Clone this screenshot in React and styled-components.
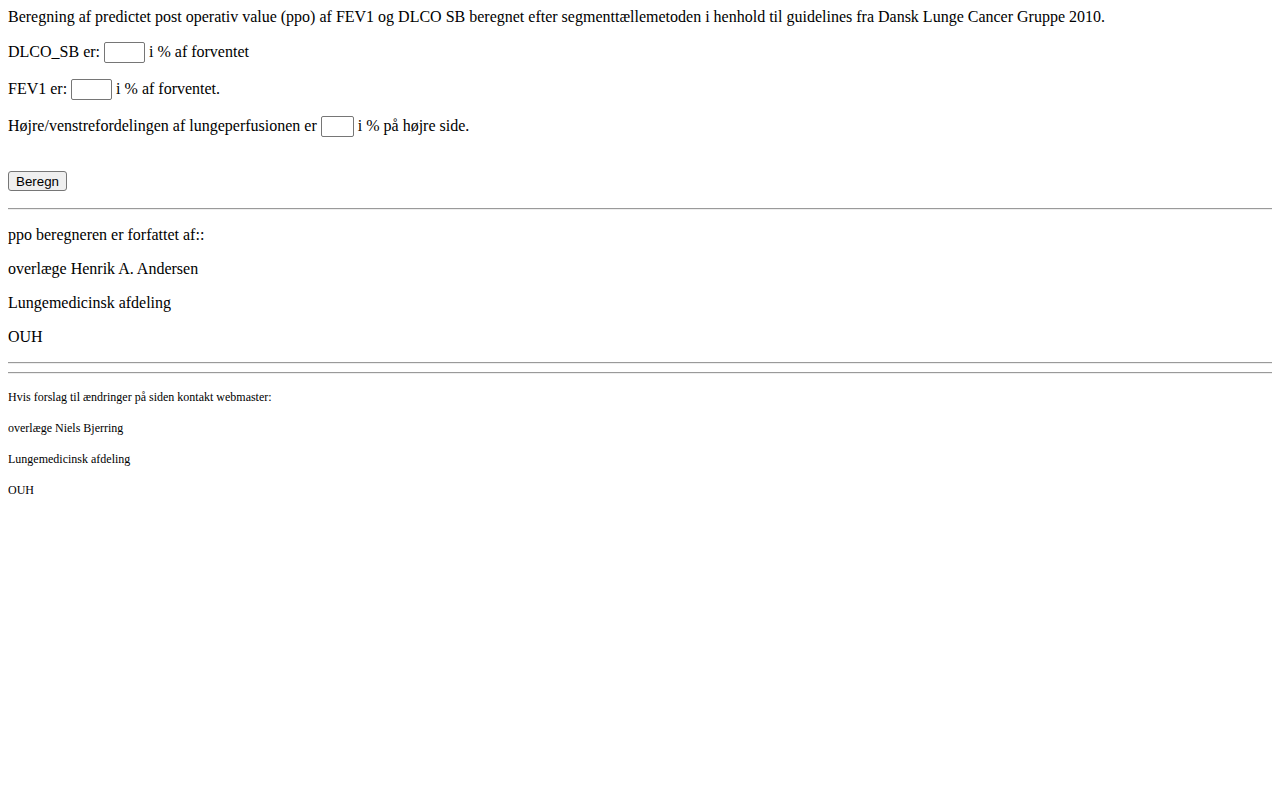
import * as React from 'react';
import styled, { createGlobalStyle } from 'styled-components';

const GlobalStyle = createGlobalStyle`
    body {
        margin: 8px;
        font-family: "Liberation Serif", "Times New Roman", serif;
        font-size: 16px;
        color: #000;
        background: #fff;
    }
`;

const Intro = styled.div`
    line-height: 18px;
`;

const FieldRow = styled.p`
    margin: 16px 0;
    line-height: 19px;
    display: flex;
    align-items: flex-start;
    gap: 4px;
    white-space: pre;
`;

const NumberInput = styled.input`
    box-sizing: border-box;
    width: ${p => p.$width || 41}px;
    height: 21px;
    padding: 1px 2px;
    border: 1px solid #767676;
    border-radius: 2px;
    background: #fff;
    font: 13.33px "Liberation Sans", Arial, sans-serif;
`;

const ButtonRow = styled.div`
    margin: 34px 0 17px;
`;

const CalcButton = styled.button`
    box-sizing: border-box;
    height: 20px;
    padding: 1px 7px;
    border: 1px solid #767676;
    border-radius: 3px;
    background: #efefef;
    color: #000;
    font: 13.33px "Liberation Sans", Arial, sans-serif;
`;

const Rule = styled.hr`
    margin: 8px 0;
    height: 0;
    border: none;
    border-top: 1px solid #9a9a9a;
    border-bottom: 1px solid #eeeeee;
`;

const CreditLine = styled.p`
    margin: 16px 0;
    line-height: 18px;
`;

const FooterLine = styled.p`
    margin: 16px 0;
    font-size: 12px;
    line-height: 15px;
`;

const authors = ['ppo beregneren er forfattet af::', 'overlæge Henrik A. Andersen', 'Lungemedicinsk afdeling', 'OUH'];
const webmaster = ['Hvis forslag til ændringer på siden kontakt webmaster:', 'overlæge Niels Bjerring', 'Lungemedicinsk afdeling', 'OUH'];

export default function App() {
    return (
        <React.Fragment>
            <GlobalStyle />
            <form onSubmit={e => e.preventDefault()}>
                <Intro>
                    Beregning af predictet post operativ value (ppo) af FEV1 og DLCO SB beregnet efter segmenttællemetoden i henhold til guidelines fra Dansk Lunge Cancer Gruppe 2010.
                </Intro>
                <FieldRow>DLCO_SB er:<NumberInput type="text" />i % af forventet</FieldRow>
                <FieldRow>FEV1 er:<NumberInput type="text" />i % af forventet.</FieldRow>
                <FieldRow>Højre/venstrefordelingen af lungeperfusionen er<NumberInput type="text" $width={33} />i % på højre side.</FieldRow>
                <ButtonRow>
                    <CalcButton type="button">Beregn</CalcButton>
                </ButtonRow>
            </form>
            <Rule />
            {authors.map((line, i) => <CreditLine key={i}>{line}</CreditLine>)}
            <Rule />
            <Rule />
            {webmaster.map((line, i) => <FooterLine key={i}>{line}</FooterLine>)}
        </React.Fragment>
    );
}
